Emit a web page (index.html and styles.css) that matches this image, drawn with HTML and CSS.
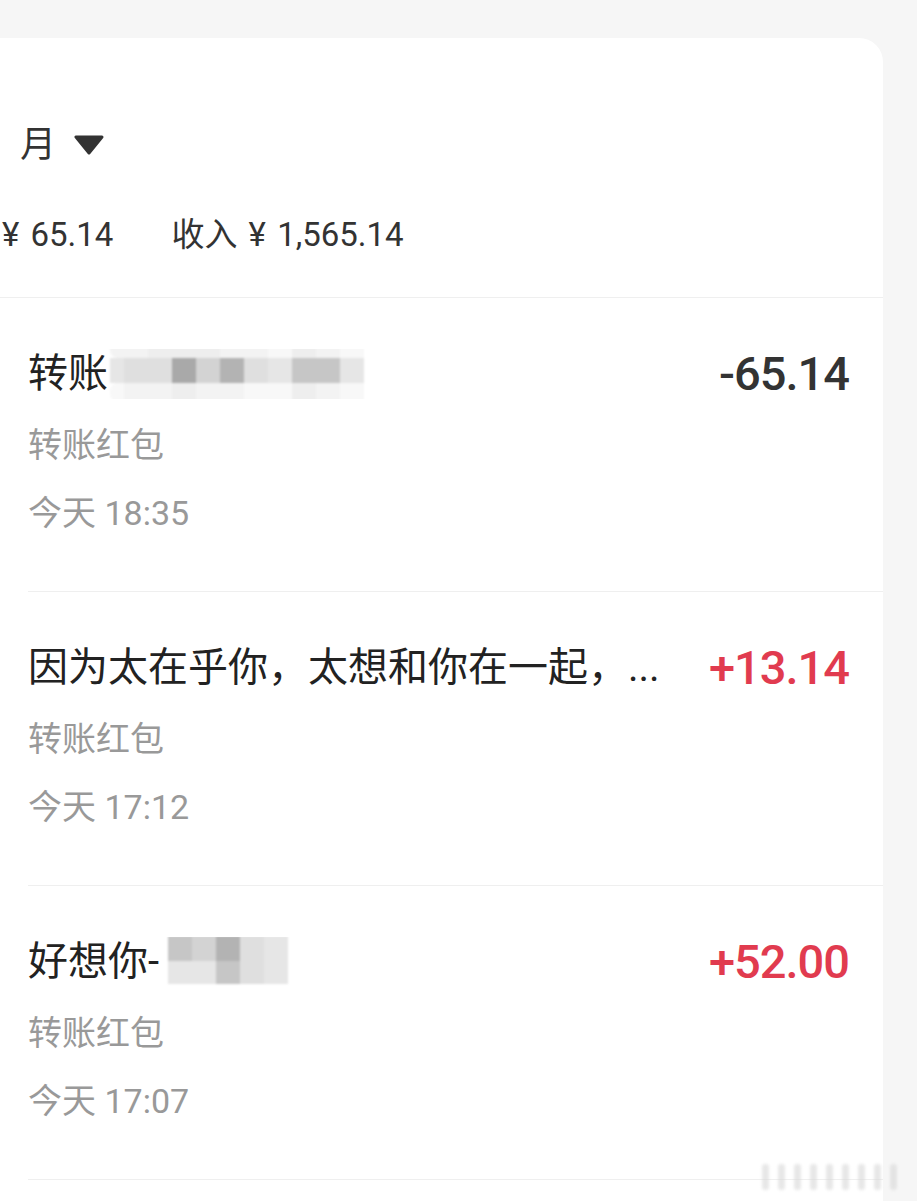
FILE: index.html
```html
<!DOCTYPE html>
<html lang="zh-CN">
<head>
  <meta charset="UTF-8">
  <title>账单</title>
  <link rel="stylesheet" href="styles.css">
</head>
<body>

  <div class="card">
    <div class="head">
      <div class="month">
        月
        <svg class="caret" width="30" height="20" viewBox="0 0 30 20">
          <polygon points="2,2 28,2 15,18" fill="#333" stroke="#333" stroke-width="3" stroke-linejoin="round"/>
        </svg>
      </div>
      <div class="totals">
        <span>¥ 65.14</span>
        <span>收入 ¥ 1,565.14</span>
      </div>
    </div>

    <ul class="list">
      <li class="item">
        <div class="item-body">
          <div class="info">
            <div class="title">转账<span class="mosaic m1">
              <i class="c8"></i><i class="c8"></i><i class="c7"></i><i class="c7"></i><i class="c7"></i><i class="c8"></i><i class="c8"></i><i class="c9"></i><i class="c7"></i><i class="c8"></i><i class="c9"></i>
              <i class="c6"></i><i class="c5"></i><i class="c5"></i><i class="c1"></i><i class="c4"></i><i class="c2"></i><i class="c5"></i><i class="c6"></i><i class="c3"></i><i class="c3"></i><i class="c6"></i>
              <i class="c9"></i><i class="c8"></i><i class="c8"></i><i class="c7"></i><i class="c8"></i><i class="c8"></i><i class="c9"></i><i class="c9"></i><i class="c7"></i><i class="c8"></i><i class="c9"></i>
            </span></div>
            <div class="sub">转账红包</div>
            <div class="sub">今天 18:35</div>
          </div>
          <div class="amount">-65.14</div>
        </div>
      </li>

      <li class="item">
        <div class="item-body">
          <div class="info">
            <div class="title">因为太在乎你，太想和你在一起，...</div>
            <div class="sub">转账红包</div>
            <div class="sub">今天 17:12</div>
          </div>
          <div class="amount plus">+13.14</div>
        </div>
      </li>

      <li class="item">
        <div class="item-body">
          <div class="info">
            <div class="title">好想你-<span class="mosaic m2">
              <i class="c3"></i><i class="c4"></i><i class="c2"></i><i class="c5"></i><i class="c6"></i>
              <i class="c6"></i><i class="c6"></i><i class="c3"></i><i class="c5"></i><i class="c6"></i>
            </span></div>
            <div class="sub">转账红包</div>
            <div class="sub">今天 17:07</div>
          </div>
          <div class="amount plus">+52.00</div>
        </div>
      </li>
    </ul>
  </div>

  <div class="watermark">
    <i></i><i></i><i></i><i></i><i></i><i></i><i></i><i></i><i></i>
  </div>

</body>
</html>
```

FILE: styles.css
```css
body {
  margin: 0;
  background: #f6f6f6;
  font-family: Roboto, "Noto Sans CJK SC", sans-serif;
  color: #222;
}
.card {
  margin: 38px 34px 0 0;
  min-height: 1163px;
  background: #fff;
  border-radius: 0 24px 0 0;
}
.head {
  padding: 82px 0 39px;
  border-bottom: 1px solid #efefef;
}
.month {
  display: flex;
  align-items: center;
  padding-left: 20px;
  font-size: 36px;
  line-height: 50px;
  color: #333;
}
.caret {
  margin-left: 18px;
}
.totals {
  display: flex;
  gap: 58px;
  margin-top: 42px;
  padding-left: 2px;
  font-size: 33px;
  line-height: 46px;
  word-spacing: 3px;
  color: #333;
}
.list {
  list-style: none;
  margin: 0;
  padding: 0;
}
.item {
  padding-left: 28px;
}
.item-body {
  display: flex;
  justify-content: space-between;
  align-items: flex-start;
  gap: 30px;
  padding: 51px 34px 56px 0;
  border-bottom: 1px solid #efefef;
}
.info {
  flex: 1;
  min-width: 0;
}
.title {
  font-size: 40px;
  line-height: 50px;
  color: #222;
  white-space: nowrap;
  overflow: hidden;
}
.sub {
  margin-top: 24px;
  font-size: 34px;
  line-height: 44px;
  color: #999;
}
.amount {
  flex: none;
  font-size: 47px;
  font-weight: 500;
  line-height: 50px;
  letter-spacing: -1px;
  color: #333;
}
.amount.plus {
  color: #e13b4f;
}

/* pixelated names */
.mosaic {
  display: inline-grid;
  vertical-align: top;
  filter: blur(1px);
}
.mosaic i {
  display: block;
}
.m1 {
  grid-template-columns: 14px repeat(10, 24px);
  grid-template-rows: 15px 25px 19px;
  margin: -6px 0 -3px 2px;
}
.m1 i:nth-child(1), .m1 i:nth-child(23) {
  border-radius: 8px 0 0 8px;
}
.m2 {
  grid-template-columns: repeat(5, 24px);
  grid-template-rows: 25px 23px;
  margin: -1px 0 0 9px;
}
.c1 { background: #a9a9a9; }
.c2 { background: #b3b3b3; }
.c3 { background: #c6c6c6; }
.c4 { background: #d3d3d3; }
.c5 { background: #dfdfdf; }
.c6 { background: #e6e6e6; }
.c7 { background: #eeeeee; }
.c8 { background: #f3f3f3; }
.c9 { background: #f8f8f8; }

.watermark {
  position: absolute;
  left: 762px;
  top: 1164px;
  display: flex;
  gap: 9px;
  filter: blur(1.5px);
  opacity: 0.6;
}
.watermark i {
  display: block;
  width: 7px;
  height: 26px;
  border-radius: 3px;
  background: #d8d8d8;
}
```
